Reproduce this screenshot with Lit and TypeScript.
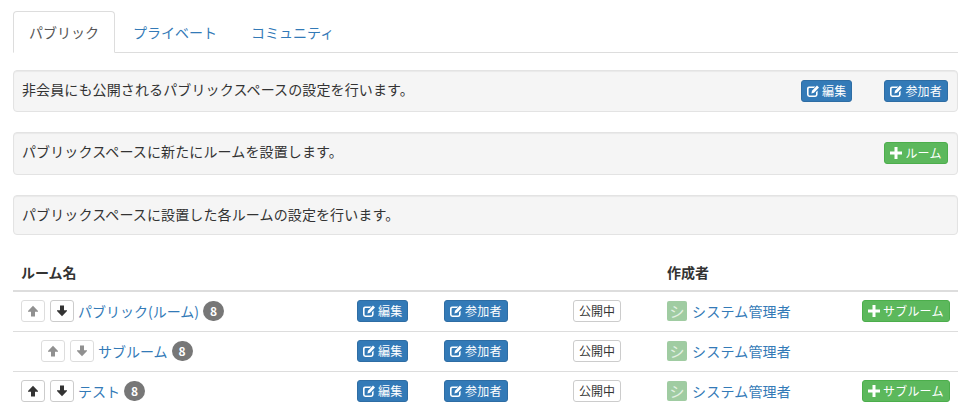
import { LitElement, html, css, svg } from "lit";
import { customElement } from "lit/decorators.js";

const editIcon = html`<svg class="ic" viewBox="0 0 12 12" width="12" height="12"><path fill="currentColor" fill-rule="evenodd" d="M2 1.4h6.4L6.8 3H2.6a1 1 0 0 0-1 1v5.4a1 1 0 0 0 1 1H8a1 1 0 0 0 1-1V7.2l1.6-1.6V9.6A2.4 2.4 0 0 1 8.2 12H2.4A2.4 2.4 0 0 1 0 9.6V3.4a2 2 0 0 1 2-2z"/><path fill="currentColor" d="M10 .6L12 2.6 7 7.8 4.4 8.4 5 5.8z"/></svg>`;
const plusIcon = html`<svg class="ic" viewBox="0 0 12 12" width="12" height="12"><path fill="currentColor" d="M4.5 0h3v4.5H12v3H7.5V12h-3V7.5H0v-3h4.5z"/></svg>`;
const arrow = (d: "up" | "down") => html`<svg viewBox="0 0 12 12" width="12" height="12"><g transform="${d === "down" ? "rotate(180 6 6)" : ""}">${svg`<path fill="currentColor" d="M6 .8l5 5.2v.8H8V11.5H4V6.8H1V6z"/>`}</g></svg>`;

type Row = { name: string; up: boolean; down: boolean; sub: boolean; child: boolean };
const rows: Row[] = [
  { name: "パブリック(ルーム)", up: false, down: true, sub: true, child: false },
  { name: "サブルーム", up: false, down: false, sub: false, child: true },
  { name: "テスト", up: true, down: true, sub: true, child: false },
];

@customElement("app-root")
export class AppRoot extends LitElement {
  static styles = css`
    :host {
      display: block;
      height: 410px;
      overflow: hidden;
      box-sizing: border-box;
      padding: 11px 9px 0 13px;
      font-family: "Noto Sans CJK JP", "Noto Sans", sans-serif;
      font-size: 14px;
      line-height: 20px;
      color: #333;
      background: #fff;
    }
    a { color: #337ab7; text-decoration: none; }
    .tabs {
      display: flex;
      height: 41px;
      border-bottom: 1px solid #ddd;
      margin-bottom: 17px;
    }
    .tab {
      box-sizing: border-box;
      height: 42px;
      padding: 10px 15px;
      margin-right: 2px;
      border: 1px solid transparent;
      border-radius: 4px 4px 0 0;
    }
    .tab.active {
      color: #555;
      background: #fff;
      border-color: #ddd #ddd #fff;
    }
    .well {
      display: flex;
      align-items: flex-start;
      justify-content: space-between;
      box-sizing: border-box;
      padding: 9px;
      background: #f5f5f5;
      border: 1px solid #e3e3e3;
      border-radius: 4px;
      box-shadow: inset 0 1px 1px rgba(0, 0, 0, 0.05);
    }
    .w1 { height: 42px; margin-bottom: 20px; }
    .w2 { height: 43px; margin-bottom: 20px; }
    .w3 { height: 40px; margin-bottom: 20px; }
    .well .msg { margin-top: -1px; margin-left: -1px; letter-spacing: 0.12px; }
    .actions { display: flex; gap: 32px; }
    .actions .green { min-width: 64px; }
    .btn {
      display: inline-flex;
      align-items: center;
      justify-content: center;
      gap: 3px;
      box-sizing: border-box;
      height: 22px;
      padding: 0 5px;
      font-size: 12px;
      line-height: 18px;
      letter-spacing: 0.2px;
      color: #fff;
      border: 1px solid;
      border-radius: 3px;
      white-space: nowrap;
    }
    .blue { background: #337ab7; border-color: #2e6da4; }
    .green { background: #5cb85c; border-color: #4cae4c; }
    .ic { flex: none; }
    table {
      border-collapse: collapse;
      table-layout: fixed;
      width: 945px;
    }
    th {
      text-align: left;
      height: 36px;
      box-sizing: border-box;
      padding: 0 8px 8px;
      vertical-align: bottom;
      font-weight: 700;
      border-bottom: 2px solid #ddd;
    }
    thead tr { height: 36px; }
    td {
      box-sizing: border-box;
      height: 40px;
      padding: 0 8px;
      vertical-align: middle;
      border-top: 1px solid #ddd;
    }
    tbody tr:first-child td { border-top: 0; height: 40px; }
    .name { display: flex; align-items: center; }
    .name.child { padding-left: 20px; }
    .mv {
      display: inline-flex;
      align-items: center;
      justify-content: center;
      box-sizing: border-box;
      width: 23.5px;
      height: 22px;
      margin-right: 5.5px;
      background: #fff;
      border: 1px solid #ccc;
      border-radius: 3px;
      color: #333;
    }
    .mv.off { opacity: 0.65; color: #555; }
    .name a { white-space: nowrap; margin: -1px 0 0 -1px; }
    .badge {
      display: inline-block;
      min-width: 7px;
      padding: 3px 7px;
      margin-left: 4px;
      font-size: 12px;
      font-weight: 700;
      line-height: 14px;
      color: #fff;
      text-align: center;
      background: #777;
      border-radius: 10px;
    }
    .status {
      display: inline-flex;
      align-items: center;
      justify-content: center;
      box-sizing: border-box;
      width: 48px;
      height: 22px;
      font-size: 12px;
      color: #333;
      background: #fff;
      border: 1px solid #ccc;
      border-radius: 3px;
    }
    .author { display: flex; align-items: center; gap: 5px; white-space: nowrap; }
    .author a { letter-spacing: 0.2px; margin-top: -1px; }
    .avatar {
      display: inline-flex;
      align-items: center;
      justify-content: center;
      width: 20px;
      height: 20px;
      background: #a0cca2;
      color: #e4f1e4;
      font-size: 15px;
      border-radius: 2px;
      flex: none;
    }
    .cellflex { display: flex; align-items: center; }
  `;

  private editBtn(label: string) {
    return html`<a class="btn blue">${editIcon}<span>${label}</span></a>`;
  }
  private addBtn(label: string) {
    return html`<a class="btn green">${plusIcon}<span>${label}</span></a>`;
  }

  render() {
    return html`
      <nav class="tabs">
        <div class="tab active">パブリック</div>
        <a class="tab">プライベート</a>
        <a class="tab">コミュニティ</a>
      </nav>
      <div class="well w1">
        <span class="msg">非会員にも公開されるパブリックスペースの設定を行います。</span>
        <div class="actions">${this.editBtn("編集")}${this.editBtn("参加者")}</div>
      </div>
      <div class="well w2">
        <span class="msg">パブリックスペースに新たにルームを設置します。</span>
        <div class="actions">${this.addBtn("ルーム")}</div>
      </div>
      <div class="well w3">
        <span class="msg">パブリックスペースに設置した各ルームの設定を行います。</span>
      </div>
      <table>
        <colgroup>
          <col style="width:336px" /><col style="width:87px" /><col style="width:129px" /><col style="width:94px" /><col style="width:195px" /><col style="width:104px" />
        </colgroup>
        <thead>
          <tr><th>ルーム名</th><th></th><th></th><th></th><th>作成者</th><th></th></tr>
        </thead>
        <tbody>
          ${rows.map(
            (r) => html`<tr>
              <td>
                <div class="name ${r.child ? "child" : ""}">
                  <span class="mv ${r.up ? "" : "off"}">${arrow("up")}</span>
                  <span class="mv ${r.down ? "" : "off"}">${arrow("down")}</span>
                  <a>${r.name}</a><span class="badge">8</span>
                </div>
              </td>
              <td><div class="cellflex">${this.editBtn("編集")}</div></td>
              <td><div class="cellflex">${this.editBtn("参加者")}</div></td>
              <td><div class="cellflex"><span class="status">公開中</span></div></td>
              <td>
                <div class="author"><span class="avatar">シ</span><a>システム管理者</a></div>
              </td>
              <td><div class="cellflex">${r.sub ? this.addBtn("サブルーム") : ""}</div></td>
            </tr>`
          )}
        </tbody>
      </table>
    `;
  }
}
